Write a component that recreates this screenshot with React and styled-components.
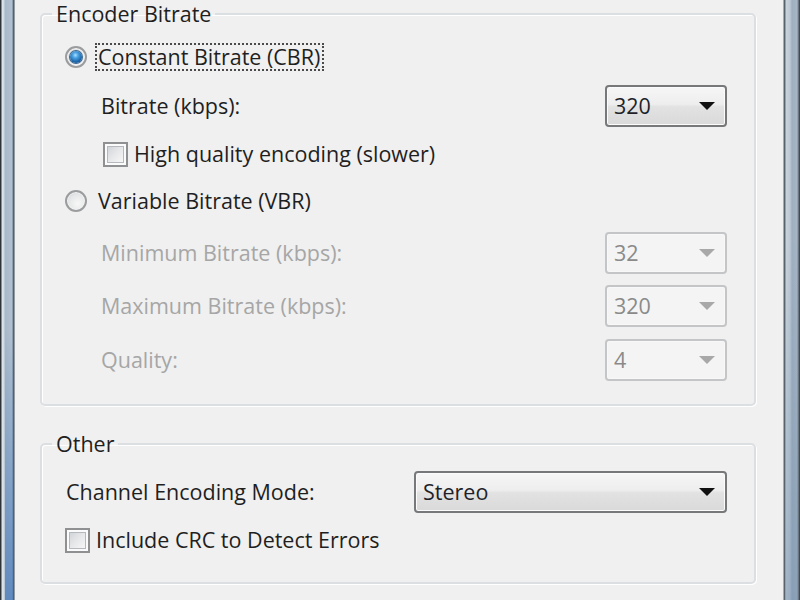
import React from 'react'
import styled, { createGlobalStyle } from 'styled-components'

const GlobalStyle = createGlobalStyle`
  html, body {
    margin: 0;
    padding: 0;
    background: #f0f0f0;
  }
  body {
    font-family: 'Open Sans', 'Noto Sans', sans-serif;
    color: #1f1f1f;
  }
`

const Window = styled.div`
  display: flex;
  width: 800px;
  height: 600px;
  overflow: hidden;
  background: #f0f0f0;
`

const LeftFrame = styled.div`
  flex: none;
  width: 16px;
  background:
    linear-gradient(to bottom, rgba(70, 120, 185, 0) 55%, rgba(70, 120, 185, 0.75) 100%) 5px 0 / 8px 100% no-repeat,
    linear-gradient(to right, #2e3338 0, #2e3338 1px, #dfe6ec 2px, #cfd9e2 4px, #a7b8c9 5px, #b1c1d1 12px, #6c7b89 13px, #3d4650 14px, #e9edf0 15px, #f4f4f4 16px);
`

const RightFrame = styled.div`
  flex: none;
  width: 17px;
  background:
    linear-gradient(to bottom, rgba(90, 125, 160, 0) 40%, rgba(90, 125, 160, 0.35) 100%) 3px 0 / 12px 100% no-repeat,
    linear-gradient(to right, #fbfbfb 0, #4f5a64 1px, #5f6b76 2px, #c9d3dc 3px, #bcc8d3 7px, #9eafc0 9px, #a7b6c4 14px, #56606a 16px, #2e3338 17px);
`

const Content = styled.div`
  flex: 1;
  display: flex;
  flex-direction: column;
  padding: 0 27px 0 24px;
`

const Group = styled.fieldset`
  margin: ${p => p.$top || 0}px 0 0;
  padding: 0 27px ${p => p.$bottom || 0}px 23px;
  border: 2px solid #dcdfe2;
  border-radius: 5px;
  box-shadow: inset 1px 1px 0 #ffffff, 1px 1px 0 #ffffff;
  display: flex;
  flex-direction: column;
  min-width: 0;
`

const Legend = styled.legend`
  margin-left: -13px;
  padding: 0 4px;
  font-size: 21.5px;
  line-height: 28px;
  color: #1f1f1f;
`

const Row = styled.div`
  display: flex;
  align-items: center;
  height: ${p => p.$h || 30}px;
  margin-top: ${p => p.$top || 0}px;
  padding-left: ${p => p.$indent || 0}px;
`

const Text = styled.span`
  font-size: 21.5px;
  line-height: 28px;
  white-space: nowrap;
  color: ${p => (p.$disabled ? '#a6a6a6' : '#1f1f1f')};
`

const FocusText = styled(Text)`
  padding: 0 2px 0 1px;
  border: 2px dotted ${p => (p.$focus ? '#4a4a4a' : 'transparent')};
  line-height: 24px;
`

const Radio = styled.span`
  flex: none;
  position: relative;
  width: 22px;
  height: 22px;
  margin-right: 8px;
  border-radius: 50%;
  box-sizing: border-box;
  border: 2px solid #9a9c9e;
  background: radial-gradient(circle at 60% 65%, #f7f7f7 0, #e6e7e8 55%, #c9cbcd 100%);
  box-shadow: inset 0 0 0 1px #f4f4f4;

  &::after {
    content: '';
    display: ${p => (p.$checked ? 'block' : 'none')};
    position: absolute;
    left: 3px;
    top: 3px;
    width: 12px;
    height: 12px;
    border-radius: 50%;
    background: radial-gradient(circle at 45% 35%, #aee0ff 0, #4ea6e4 25%, #1a62a8 65%, #0d4580 100%);
    box-shadow: 0 0 0 1px #3a6690;
  }
`

const Check = styled.span`
  flex: none;
  width: 25px;
  height: 25px;
  margin-right: 6px;
  box-sizing: border-box;
  border: 2px solid #8f9091;
  background: #fbfbfb;
  padding: 2px;

  &::before {
    content: '';
    display: block;
    width: 100%;
    height: 100%;
    box-sizing: border-box;
    border: 1px solid #b5b9bd;
    background: linear-gradient(135deg, #d2d5d9 0%, #e7e8ea 50%, #f6f6f6 100%);
  }
`

const Combo = styled.div`
  flex: none;
  margin-left: auto;
  display: flex;
  align-items: center;
  box-sizing: border-box;
  width: ${p => p.$w || 122}px;
  height: ${p => p.$h || 42}px;
  padding: 0 8px 0 7px;
  border-radius: 4px;
  border: 2px solid ${p => (p.$disabled ? '#c3c5c7' : '#767879')};
  background: ${p =>
    p.$disabled
      ? '#f4f4f4'
      : 'linear-gradient(to bottom, #f6f6f6 0%, #eeeeee 45%, #e2e2e2 52%, #d9d9d9 100%)'};
  box-shadow: inset 0 0 0 1px ${p => (p.$disabled ? '#f8f8f8' : '#fbfbfb')};
  font-size: 21.5px;
  color: ${p => (p.$disabled ? '#8a8a8a' : '#1f1f2a')};
`

const ComboValue = styled.span`
  flex: 1;
  line-height: 28px;
`

const Arrow = styled.span`
  flex: none;
  width: 0;
  height: 0;
  margin-right: 2px;
  border-left: 8px solid transparent;
  border-right: 8px solid transparent;
  border-top: 8px solid ${p => (p.$disabled ? '#a8a8a8' : '#111111')};
`

function Select({ value, width, disabled }) {
  return (
    <Combo $w={width} $disabled={disabled}>
      <ComboValue>{value}</ComboValue>
      <Arrow $disabled={disabled} />
    </Combo>
  )
}

export default function App() {
  return (
    <Window>
      <GlobalStyle />
      <LeftFrame />
      <Content>
        <Group $bottom={23}>
          <Legend>Encoder Bitrate</Legend>
          <Row $top={14} $h={30}>
            <Radio $checked />
            <FocusText $focus>Constant Bitrate (CBR)</FocusText>
          </Row>
          <Row $top={13} $h={42} $indent={36}>
            <Text>Bitrate (kbps):</Text>
            <Select value="320" />
          </Row>
          <Row $top={14} $h={26} $indent={38}>
            <Check />
            <Text>High quality encoding (slower)</Text>
          </Row>
          <Row $top={19} $h={30}>
            <Radio />
            <FocusText>Variable Bitrate (VBR)</FocusText>
          </Row>
          <Row $top={16} $h={42} $indent={36}>
            <Text $disabled>Minimum Bitrate (kbps):</Text>
            <Select value="32" disabled />
          </Row>
          <Row $top={11} $h={42} $indent={36}>
            <Text $disabled>Maximum Bitrate (kbps):</Text>
            <Select value="320" disabled />
          </Row>
          <Row $top={12} $h={42} $indent={36}>
            <Text $disabled>Quality:</Text>
            <Select value="4" disabled />
          </Row>
        </Group>

        <Group $top={24} $bottom={29}>
          <Legend>Other</Legend>
          <Row $top={13} $h={42} $indent={1}>
            <Text>Channel Encoding Mode:</Text>
            <Select value="Stereo" width={313} />
          </Row>
          <Row $top={14} $h={26}>
            <Check />
            <Text>Include CRC to Detect Errors</Text>
          </Row>
        </Group>
      </Content>
      <RightFrame />
    </Window>
  )
}
